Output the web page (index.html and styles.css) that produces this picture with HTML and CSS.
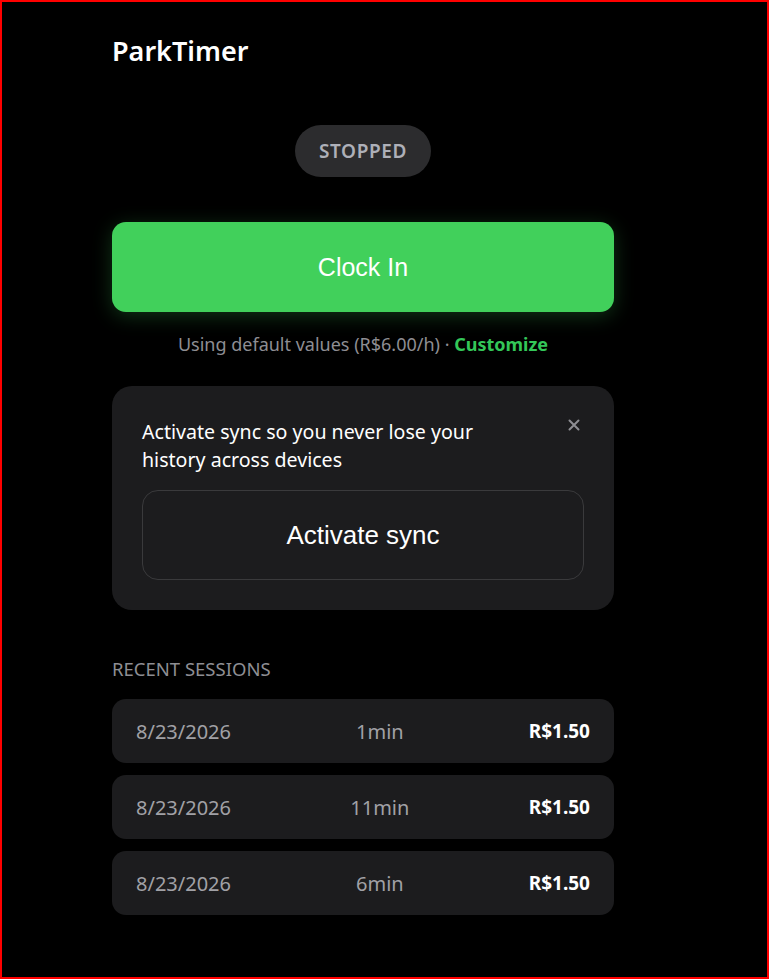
FILE: index.html
```html
<!DOCTYPE html>
<html lang="en">
<head>
    <meta charset="UTF-8">
    <meta name="viewport" content="width=device-width, initial-scale=1.0">
    <title>ParkTimer</title>
    <link rel="stylesheet" href="styles.css">
</head>
<body>
    <div class="frame">
        <div class="app">
            <h1 class="title">ParkTimer</h1>

            <div class="status-row">
                <span class="status">STOPPED</span>
            </div>

            <button type="button" class="clock-btn">Clock In</button>

            <p class="rate">Using default values (R$6.00/h) · <a href="#" class="customize">Customize</a></p>

            <div class="sync-card">
                <div class="sync-head">
                    <p class="sync-text">Activate sync so you never lose your history across devices</p>
                    <button type="button" class="close-btn" aria-label="Close">
                        <svg width="12" height="12" viewBox="0 0 12 12"><path d="M1.5 1.5 L10.5 10.5 M10.5 1.5 L1.5 10.5" stroke="#8e8e93" stroke-width="2" stroke-linecap="round"/></svg>
                    </button>
                </div>
                <button type="button" class="sync-btn">Activate sync</button>
            </div>

            <h2 class="section-title">RECENT SESSIONS</h2>
            <div class="sessions">
                <div class="session">
                    <span class="date">8/23/2026</span>
                    <span class="duration">1min</span>
                    <span class="price">R$1.50</span>
                </div>
                <div class="session">
                    <span class="date">8/23/2026</span>
                    <span class="duration">11min</span>
                    <span class="price">R$1.50</span>
                </div>
                <div class="session">
                    <span class="date">8/23/2026</span>
                    <span class="duration">6min</span>
                    <span class="price">R$1.50</span>
                </div>
            </div>
        </div>
    </div>
</body>
</html>
```

FILE: styles.css
```css
body {
    margin: 0;
    background-color: #000;
    font-family: "Noto Sans", "Open Sans", sans-serif;
    color: #fff;
}
.frame {
    width: 769px;
    height: 979px;
    box-sizing: border-box;
    border: 2px solid #ff0000;
    overflow: hidden;
}
.app {
    width: 502px;
    margin-left: 110px;
    padding-top: 31px;
}
.title {
    margin: 0;
    font-size: 27px;
    line-height: 36px;
    font-weight: 600;
}
.status-row {
    display: flex;
    justify-content: center;
    margin-top: 56px;
}
.status {
    display: inline-block;
    height: 52px;
    line-height: 52px;
    padding: 0 24px;
    border-radius: 26px;
    background-color: #2c2c2e;
    color: #aeb0b8;
    font-size: 19px;
    font-weight: 600;
    letter-spacing: 0.6px;
}
.clock-btn {
    display: block;
    width: 100%;
    height: 90px;
    margin-top: 45px;
    border: none;
    border-radius: 14px;
    background-color: #41d05b;
    color: #fff;
    font-family: "Liberation Sans", Arial, sans-serif;
    font-size: 25px;
    box-shadow: 0 4px 20px rgba(65, 208, 91, 0.25);
    cursor: pointer;
}
.rate {
    margin: 20px 0 0;
    text-align: center;
    font-size: 18px;
    line-height: 24px;
    color: #8e8e93;
}
.customize {
    color: #34c759;
    font-weight: 700;
    text-decoration: none;
}
.sync-card {
    margin-top: 30px;
    padding: 32px 30px 30px;
    background-color: #1c1c1e;
    border-radius: 20px;
}
.sync-head {
    display: flex;
    justify-content: space-between;
    align-items: flex-start;
}
.sync-text {
    margin: 0;
    max-width: 360px;
    font-size: 19.6px;
    line-height: 28px;
}
.close-btn {
    width: 20px;
    height: 20px;
    margin-top: -3px;
    padding: 0;
    border: none;
    background: none;
    display: flex;
    align-items: center;
    justify-content: center;
    cursor: pointer;
}
.sync-btn {
    display: block;
    width: 100%;
    height: 90px;
    margin-top: 16px;
    border: 1px solid #3a3a3c;
    border-radius: 16px;
    background: transparent;
    color: #fff;
    font-family: "Liberation Sans", Arial, sans-serif;
    font-size: 26px;
    cursor: pointer;
}
.section-title {
    margin: 47px 0 0;
    font-size: 18.5px;
    line-height: 24px;
    font-weight: 400;
    color: #8e8e93;
}
.sessions {
    display: flex;
    flex-direction: column;
    gap: 12px;
    margin-top: 18px;
}
.session {
    display: flex;
    justify-content: space-between;
    align-items: center;
    height: 64px;
    padding: 0 24px;
    background-color: #1c1c1e;
    border-radius: 14px;
    font-size: 20px;
}
.date, .duration {
    color: #a1a1a6;
}
.price {
    font-weight: 700;
    font-size: 19px;
}
```
